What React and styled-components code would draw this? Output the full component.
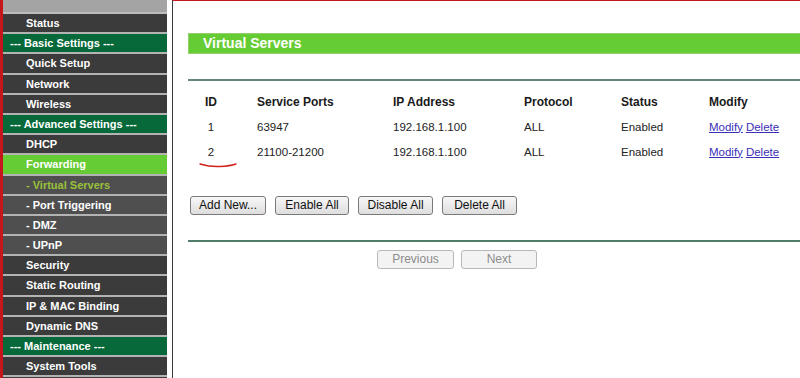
import styled, { createGlobalStyle } from 'styled-components';

const GlobalStyle = createGlobalStyle`
  html, body {
    margin: 0;
    background: #ffffff;
    font-family: "Liberation Sans", Arial, sans-serif;
    overflow: hidden;
  }
`;

const Page = styled.div`
  display: flex;
  width: 800px;
  height: 378px;
  overflow: hidden;
`;

const RedEdge = styled.div`
  width: 3px;
  flex-shrink: 0;
  background: #c4161c;
`;

const Sidebar = styled.nav`
  width: 164px;
  flex-shrink: 0;
  margin-right: 5px;
  background: #3c3c3c;
  display: flex;
  flex-direction: column;
  overflow: hidden;
`;

const TopCap = styled.div`
  flex-shrink: 0;
  height: 12px;
  background: #a4a4a4;
  border-bottom: 2px solid #bdbdbd;
`;

const menuColors = {
  item: { bg: '#3b3b3b', fg: '#ffffff', pad: 23 },
  section: { bg: '#07693a', fg: '#ffffff', pad: 7 },
  active: { bg: '#66cc33', fg: '#ffffff', pad: 23 },
  sub: { bg: '#4f4f4f', fg: '#ffffff', pad: 23 },
  current: { bg: '#4f4f4f', fg: '#99c13a', pad: 23 },
};

const MenuItem = styled.div`
  flex-shrink: 0;
  height: 18.2px;
  line-height: 18px;
  border-bottom: 2px solid #b3b3b3;
  padding-left: ${(p) => menuColors[p.$kind].pad}px;
  background: ${(p) => menuColors[p.$kind].bg};
  color: ${(p) => menuColors[p.$kind].fg};
  font-size: 11px;
  font-weight: bold;
  white-space: nowrap;
`;

const Main = styled.main`
  flex: 1;
  border-left: 1px solid #3a3a3a;
  border-top: 1px solid #c4161c;
  padding: 32px 0 0 15px;
  min-width: 0;
`;

const Inner = styled.div`
  width: 640px;
`;

const TitleBar = styled.div`
  height: 19px;
  line-height: 19px;
  background: #66cc33;
  border: 1px solid #94cf6c;
  border-right: none;
  color: #ffffff;
  font-size: 14px;
  font-weight: bold;
  padding-left: 14px;
`;

const Rule = styled.div`
  height: 2px;
  background: ${(p) => p.$color || '#67867a'};
  margin-top: ${(p) => p.$top}px;
`;

const TableWrap = styled.div`
  position: relative;
  margin-top: 8px;
`;

const Grid = styled.div`
  display: grid;
  grid-template-columns: 69px 136px 131px 97px 88px 1fr;
  grid-auto-rows: 25px;
  align-items: center;
  font-size: 11.5px;
  color: #222222;
`;

const Head = styled.div`
  font-size: 12px;
  font-weight: bold;
  color: #1a1a1a;
  ${(p) => p.$center && 'text-align: center; padding-right: 23px;'}
`;

const Cell = styled.div`
  ${(p) => p.$center && 'text-align: center; padding-right: 23px;'}
`;

const Link = styled.a`
  color: #3b2fb8;
  text-decoration: underline;
  margin-right: 3px;
  cursor: pointer;
`;

const Scribble = styled.svg`
  position: absolute;
  left: 10px;
  top: 72px;
  pointer-events: none;
`;

const ButtonRow = styled.div`
  display: flex;
  gap: 9px;
  margin-top: 32px;
  padding-left: ${(p) => p.$left}px;
`;

const Button = styled.button`
  height: 19px;
  min-width: ${(p) => p.$min || 0}px;
  padding: 0 8px;
  font-family: "Liberation Sans", Arial, sans-serif;
  font-size: 12px;
  color: ${(p) => (p.disabled ? '#8d8d8d' : '#111111')};
  background: ${(p) =>
    p.disabled ? '#f3f3f3' : 'linear-gradient(#f7f7f7, #dedede)'};
  border: 1px solid ${(p) => (p.disabled ? '#b8b8b8' : '#7a7a7a')};
  border-radius: 3px;
  line-height: 17px;
`;

const PagerRow = styled(ButtonRow)`
  gap: 7px;
  margin-top: 8px;
`;

const menu = [
  ['item', 'Status'],
  ['section', '--- Basic Settings ---'],
  ['item', 'Quick Setup'],
  ['item', 'Network'],
  ['item', 'Wireless'],
  ['section', '--- Advanced Settings ---'],
  ['item', 'DHCP'],
  ['active', 'Forwarding'],
  ['current', '- Virtual Servers'],
  ['sub', '- Port Triggering'],
  ['sub', '- DMZ'],
  ['sub', '- UPnP'],
  ['item', 'Security'],
  ['item', 'Static Routing'],
  ['item', 'IP & MAC Binding'],
  ['item', 'Dynamic DNS'],
  ['section', '--- Maintenance ---'],
  ['item', 'System Tools'],
];

const servers = [
  { id: 1, ports: '63947', ip: '192.168.1.100', proto: 'ALL', status: 'Enabled' },
  { id: 2, ports: '21100-21200', ip: '192.168.1.100', proto: 'ALL', status: 'Enabled' },
];

function App() {
  return (
    <Page>
      <GlobalStyle />
      <RedEdge />
      <Sidebar>
        <TopCap />
        {menu.map(([kind, label]) => (
          <MenuItem key={label} $kind={kind}>{label}</MenuItem>
        ))}
      </Sidebar>
      <Main>
        <Inner>
          <TitleBar>Virtual Servers</TitleBar>
          <Rule $top={25} />
          <TableWrap>
            <Grid>
              <Head $center>ID</Head>
              <Head>Service Ports</Head>
              <Head>IP Address</Head>
              <Head>Protocol</Head>
              <Head>Status</Head>
              <Head>Modify</Head>
              {servers.map((s) => [
                <Cell key={s.id + 'a'} $center>{s.id}</Cell>,
                <Cell key={s.id + 'b'}>{s.ports}</Cell>,
                <Cell key={s.id + 'c'}>{s.ip}</Cell>,
                <Cell key={s.id + 'd'}>{s.proto}</Cell>,
                <Cell key={s.id + 'e'}>{s.status}</Cell>,
                <Cell key={s.id + 'f'}>
                  <Link>Modify</Link>
                  <Link>Delete</Link>
                </Cell>,
              ])}
            </Grid>
            <Scribble width="40" height="8" viewBox="0 0 40 8">
              <path d="M2 3 Q 12 6 22 5.5 T 38 3" fill="none" stroke="#d0201c" strokeWidth="1.4" strokeLinecap="round" />
            </Scribble>
          </TableWrap>
          <ButtonRow $left={2}>
            <Button $min={76}>Add New...</Button>
            <Button $min={74}>Enable All</Button>
            <Button $min={75}>Disable All</Button>
            <Button $min={75}>Delete All</Button>
          </ButtonRow>
          <Rule $top={25} $color="#4f7e68" />
          <PagerRow $left={189}>
            <Button disabled $min={77}>Previous</Button>
            <Button disabled $min={76}>Next</Button>
          </PagerRow>
        </Inner>
      </Main>
    </Page>
  );
}

export default App;
